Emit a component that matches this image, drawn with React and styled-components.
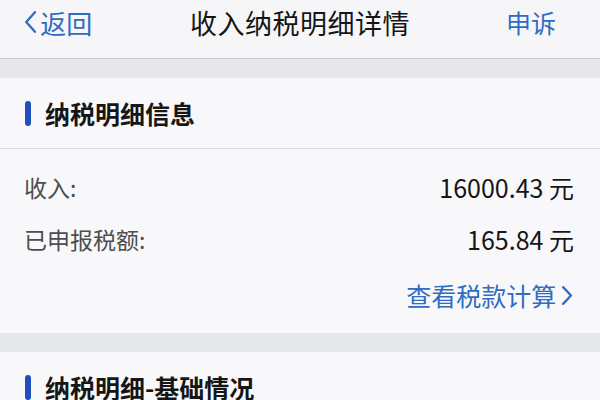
import styled, { createGlobalStyle } from 'styled-components'

const GlobalStyle = createGlobalStyle`
  html, body {
    margin: 0;
    padding: 0;
    background: #f8f8fa;
    font-family: "Noto Sans CJK SC", "Noto Sans", sans-serif;
  }
`

const Page = styled.div`
  width: 600px;
  height: 400px;
  overflow: hidden;
  background: #f8f8fa;
`

const NavBar = styled.div`
  box-sizing: border-box;
  height: 59px;
  display: grid;
  grid-template-columns: 1fr auto 1fr;
  align-items: center;
  padding: 0 24px 14px;
  background: #f6f6f8;
  border-bottom: 1px solid #c9cacf;
`

const Back = styled.div`
  display: flex;
  align-items: center;
  gap: 3px;
  color: #2f6cc2;
  font-size: 26px;
`

const Title = styled.div`
  font-size: 27px;
  color: #151515;
  letter-spacing: 0.5px;
`

const Action = styled.div`
  justify-self: end;
  padding-right: 20px;
  color: #2f6cc2;
  font-size: 25px;
`

const Gap = styled.div`
  height: 19px;
  background: #e6e7eb;
`

const Card = styled.div`
  background: #f8f8fa;
`

const SectionHead = styled.div`
  height: 70px;
  display: flex;
  align-items: center;
  gap: 14px;
  padding-left: 25px;
  border-bottom: ${p => (p.$divided ? '1px solid #dcdde1' : 'none')};
  font-size: 25px;
  font-weight: 700;
  color: #161616;
`

const Bar = styled.span`
  width: 6px;
  height: 25px;
  border-radius: 3px;
  background: #1e4fbd;
`

const Body = styled.div`
  padding: 12px 26px 12px 24px;
`

const Row = styled.div`
  height: 52px;
  display: flex;
  align-items: center;
  justify-content: space-between;
  font-size: 23px;
`

const Label = styled.span`
  color: #4d4d4f;
`

const Value = styled.span`
  color: #161616;
  font-size: 25px;
`

const LinkRow = styled.div`
  height: 52px;
  margin-top: 4px;
  display: flex;
  align-items: center;
  justify-content: flex-end;
  gap: 5px;
  color: #2f6cc2;
  font-size: 25px;
`

const Chevron = ({ dir = 'left', size = 22 }) => (
  <svg width={size * 0.55} height={size} viewBox="0 0 12 22" fill="none">
    <path
      d={dir === 'left' ? 'M10 2 L2 11 L10 20' : 'M2 3 L9.5 11 L2 19'}
      stroke="#2f6cc2"
      strokeWidth="2.2"
      strokeLinecap="round"
      strokeLinejoin="round"
    />
  </svg>
)

const App = () => {
  return (
    <Page>
      <GlobalStyle />
      <NavBar>
        <Back>
          <Chevron dir="left" size={24} />
          <span>返回</span>
        </Back>
        <Title>收入纳税明细详情</Title>
        <Action>申诉</Action>
      </NavBar>
      <Gap />
      <Card>
        <SectionHead $divided>
          <Bar />
          纳税明细信息
        </SectionHead>
        <Body>
          <Row>
            <Label>收入:</Label>
            <Value>16000.43 元</Value>
          </Row>
          <Row>
            <Label>已申报税额:</Label>
            <Value>165.84 元</Value>
          </Row>
          <LinkRow>
            查看税款计算
            <Chevron dir="right" size={23} />
          </LinkRow>
        </Body>
      </Card>
      <Gap />
      <Card>
        <SectionHead>
          <Bar />
          纳税明细-基础情况
        </SectionHead>
      </Card>
    </Page>
  )
}

export default App
